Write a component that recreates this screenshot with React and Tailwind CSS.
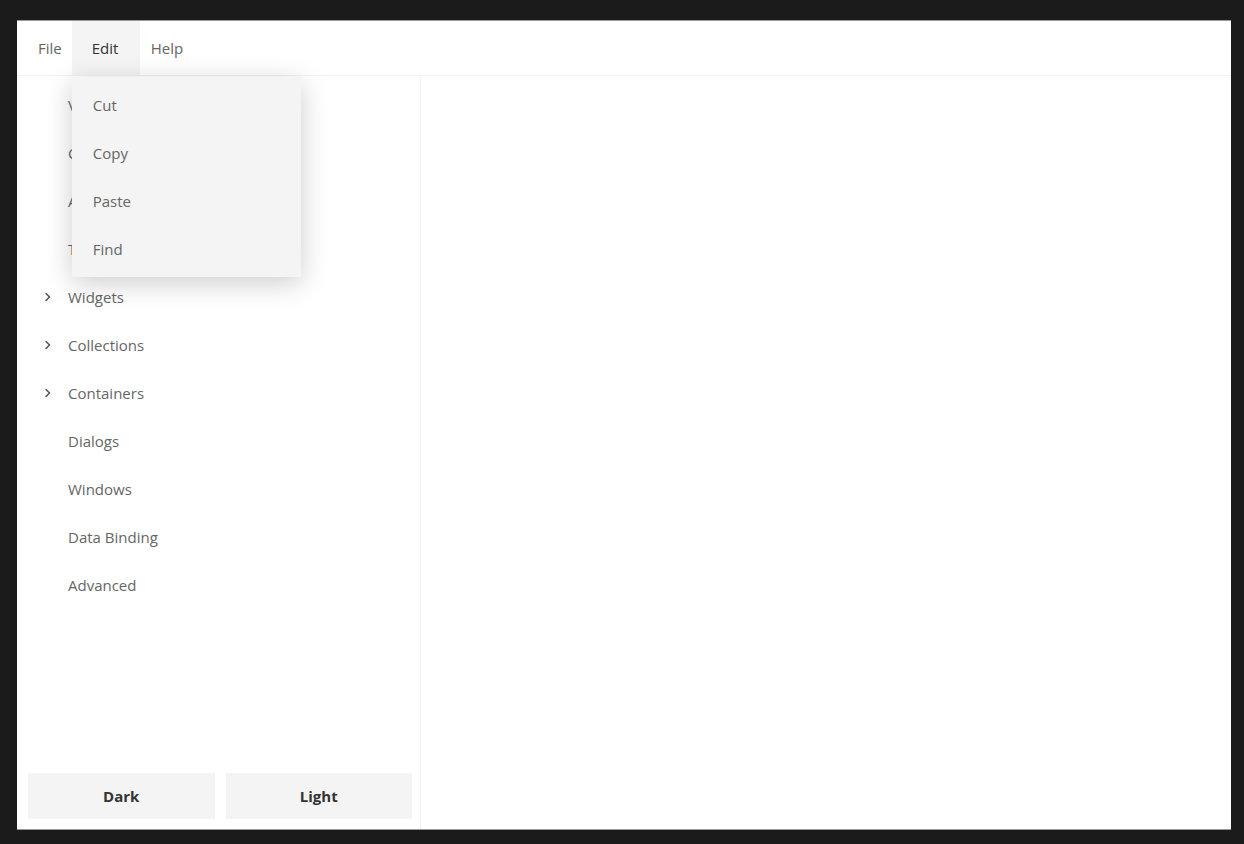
import React from "react";

const font = { fontFamily: '"Open Sans", "Noto Sans", sans-serif' };

function Chevron() {
  return (
    <svg width="8" height="10" viewBox="0 0 8 10" className="shrink-0">
      <path d="M2 1.5 L5.5 5 L2 8.5" fill="none" stroke="#555" strokeWidth="1.6" strokeLinecap="round" strokeLinejoin="round" />
    </svg>
  );
}

const items = [
  { label: "Views", chev: false },
  { label: "Controls", chev: false },
  { label: "Animations", chev: false },
  { label: "Text", chev: false },
  { label: "Widgets", chev: true },
  { label: "Collections", chev: true },
  { label: "Containers", chev: true },
  { label: "Dialogs", chev: false },
  { label: "Windows", chev: false },
  { label: "Data Binding", chev: false },
  { label: "Advanced", chev: false },
];

export default function App() {
  return (
    <div className="w-[1244px] h-[844px] bg-[#1b1b1b] pt-[20px] pl-[17px] pr-[13px] pb-[14px]" style={font}>
      <div className="w-full h-full bg-white flex flex-col border-t border-b border-[#9a9a9a]">
        <div className="h-[55px] shrink-0 flex items-stretch border-b border-[#f2f2f2] text-[15px] text-[#666]">
          <div className="pl-[21px] pr-[10px] flex items-center">File</div>
          <div className="relative w-[68px] bg-[#f4f4f4] flex items-center pl-[20px] text-[#333]">
            Edit
            <div className="absolute left-0 top-[56px] w-[229px] bg-[#f4f4f4] py-[4px] z-10 shadow-[0_6px_26px_rgba(0,0,0,0.2)]">
              {["Cut", "Copy", "Paste", "Find"].map((t) => (
                <div key={t} className="h-[48px] flex items-center pl-[21px] text-[#666]">{t}</div>
              ))}
            </div>
          </div>
          <div className="pl-[11px] flex items-center">Help</div>
        </div>
        <div className="flex-1 flex min-h-0">
          <div className="w-[404px] shrink-0 border-r border-[#f2f2f2] flex flex-col">
            <div className="flex-1 pt-[5px]">
              {items.map((it) => (
                <div key={it.label} className="h-[48px] flex items-center text-[15px] text-[#666]">
                  <div className="w-[51px] flex justify-end pr-[16px]">{it.chev && <Chevron />}</div>
                  <span>{it.label}</span>
                </div>
              ))}
            </div>
            <div className="flex gap-[11px] pl-[11px] pr-[8px] pb-[10px]">
              <button className="flex-1 h-[46px] bg-[#f4f4f4] text-[15px] font-bold text-[#333]">Dark</button>
              <button className="flex-1 h-[46px] bg-[#f4f4f4] text-[15px] font-bold text-[#333]">Light</button>
            </div>
          </div>
          <div className="flex-1" />
        </div>
      </div>
    </div>
  );
}
